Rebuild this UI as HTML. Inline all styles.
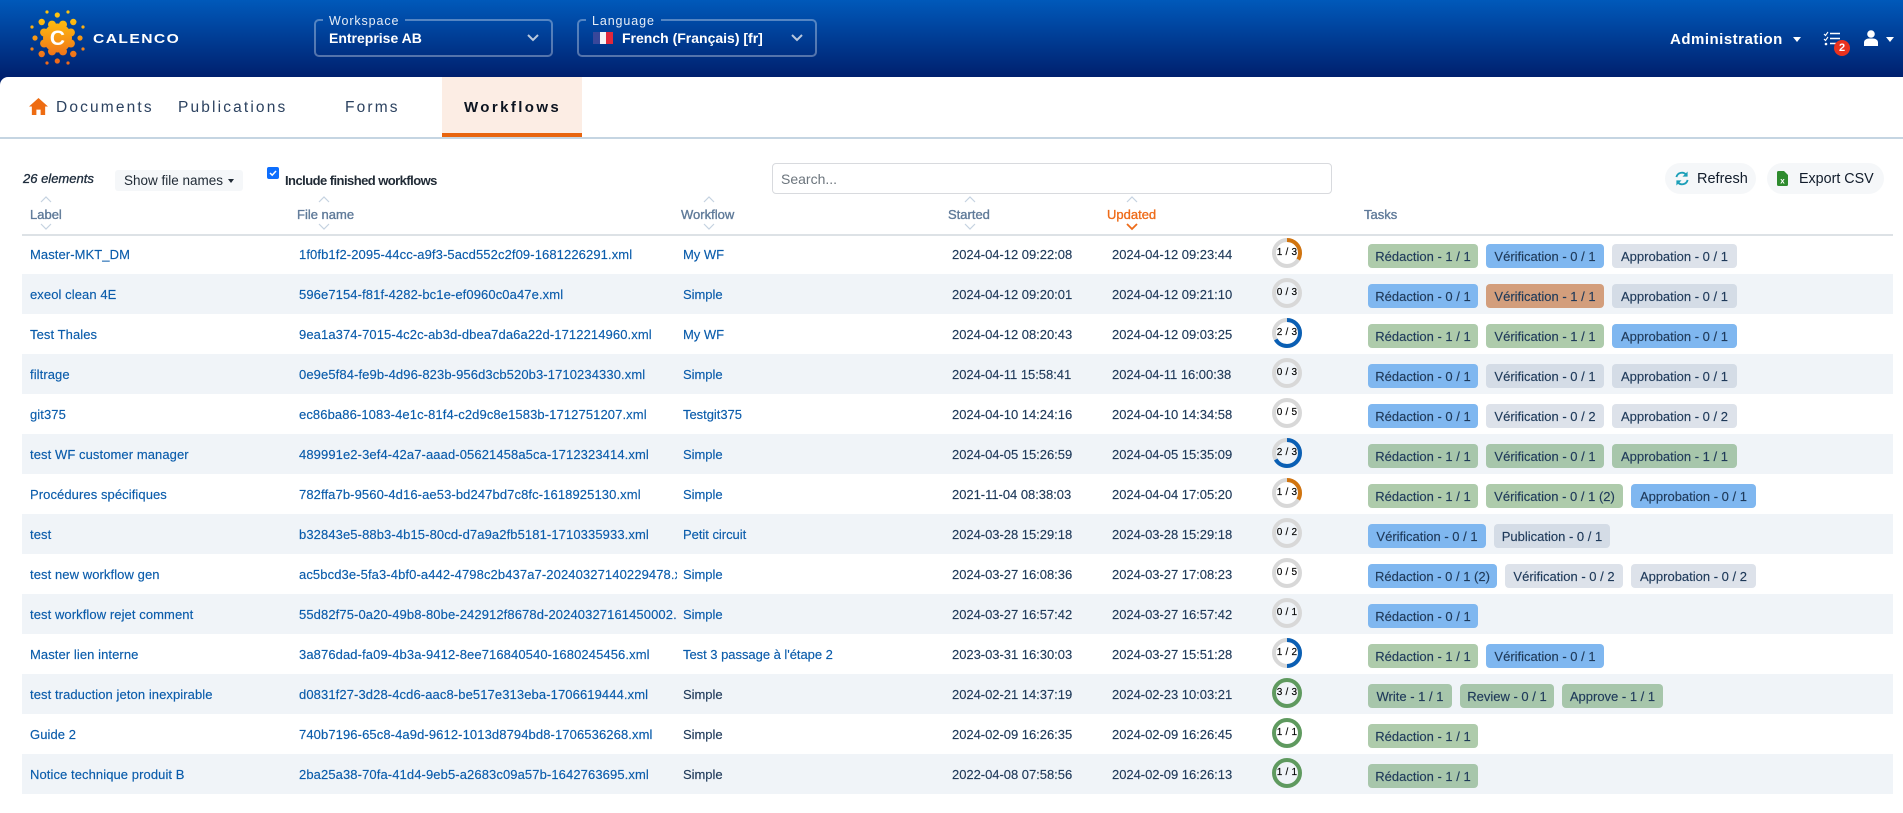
<!DOCTYPE html>
<html lang="en"><head><meta charset="utf-8"><title>Calenco Workflows</title>
<style>
*{box-sizing:border-box}
html,body{margin:0;padding:0;width:1903px;height:813px;overflow:hidden;background:#fff;font-family:"Liberation Sans",sans-serif;color:#1f3a5a}
.abs,.h,.r,.c,fieldset{position:absolute}
#top{position:absolute;left:0;top:0;width:1903px;height:85px;background:linear-gradient(#0059ba 0,#00206e 77px,#00206e 85px)}
#main{position:absolute;left:0;top:77px;width:1903px;height:736px;background:#fff;border-radius:8px 0 0 0}
fieldset{margin:0;padding:0;top:13px;height:44px;border:2px solid rgba(255,255,255,.33);border-radius:5px}
legend{margin-left:7px;padding:0 6px;font-size:12.5px;line-height:14px;color:#e6edf7;letter-spacing:.9px;height:14px;position:relative;top:1px}
.val{position:absolute;color:#fff;font-size:14px;font-weight:bold;line-height:16px;top:30px}
.tab{position:absolute;top:99px;line-height:18px;font-size:15.5px;letter-spacing:2.15px;color:#2c4260}
.h{top:207px;font-size:13px;line-height:16px;color:#5f7a99;-webkit-text-stroke:.35px #5f7a99}
.r{left:22px;width:1871px;height:40px;font-size:13px}
.r:nth-child(even){background:#f0f4f8}
.c{top:0;line-height:42px;white-space:nowrap;letter-spacing:-.03px}
.l{left:8px;color:#0a5cab;letter-spacing:.08px;-webkit-text-stroke:.15px #0a5cab}
.f{left:277px;color:#0a5cab;width:378px;overflow:hidden;letter-spacing:.1px;-webkit-text-stroke:.15px #0a5cab}
.w{left:661px;color:#0a5cab;-webkit-text-stroke:.15px #0a5cab}
.w.d{color:#1f3a5a;-webkit-text-stroke:.15px #1f3a5a}
.s{left:930px;-webkit-text-stroke:.15px #1f3a5a}
.u{left:1090px;-webkit-text-stroke:.15px #1f3a5a}
.ring{position:absolute;left:1250px;top:4px;width:30px;height:30px}
.ring b{position:absolute;left:0;top:0;width:30px;text-align:center;line-height:29px;font-size:10px;font-weight:normal;color:#000;letter-spacing:.2px;-webkit-text-stroke:.15px #000}
.ring svg{position:absolute;left:0;top:0}
.ts{position:absolute;left:1346px;top:10px;display:flex;gap:8px}
.t{display:block;height:24px;line-height:25px;border-radius:4px;text-align:center;font-size:13px;color:#1f3a5a;white-space:nowrap;-webkit-text-stroke:.15px #1f3a5a}
.gn{background:#aecbab}.bl{background:#7fb7f0}.gy{background:#dde2ea}.or{background:#d39e7c}
.r:nth-child(even) .gy{background:#d4dce6}
.r:nth-child(even) .gn{background:#a7c6ab}
.R{width:110px}.V{width:118px}.A{width:125px}
</style></head><body>
<div id="top"></div>
<div id="main"></div>

<svg class="abs" style="left:25px;top:5px" width="70" height="66" viewBox="25 5 70 66">
<defs><linearGradient id="g" gradientUnits="userSpaceOnUse" x1="0" y1="18" x2="0" y2="60"><stop offset="0" stop-color="#ffc20e"/><stop offset="1" stop-color="#ef6a1a"/></linearGradient></defs>
<g fill="url(#g)">
<circle cx="47" cy="12" r="1.6"/><circle cx="57.3" cy="15" r="2.6"/><circle cx="68" cy="12" r="1.6"/><circle cx="41.7" cy="22" r="3.2"/><circle cx="73.3" cy="22" r="3.2"/><circle cx="32" cy="27" r="1.6"/><circle cx="83" cy="27" r="1.6"/><circle cx="35" cy="38" r="2.6"/><circle cx="80" cy="38" r="2.6"/><circle cx="32" cy="49" r="1.6"/><circle cx="83" cy="49" r="1.6"/><circle cx="41.7" cy="54" r="3.2"/><circle cx="73.3" cy="54" r="3.2"/><circle cx="47" cy="63" r="1.6"/><circle cx="57.3" cy="61" r="2.6"/><circle cx="68" cy="63" r="1.6"/>
<circle cx="57.5" cy="38" r="14.5"/>
<circle cx="52" cy="24.6" r="4"/><circle cx="63" cy="24.6" r="4"/><circle cx="44.1" cy="32.5" r="4"/><circle cx="70.9" cy="32.5" r="4"/><circle cx="44.1" cy="43.5" r="4"/><circle cx="70.9" cy="43.5" r="4"/><circle cx="52" cy="51.4" r="4"/><circle cx="63" cy="51.4" r="4"/>
</g>
<text x="57.5" y="45" text-anchor="middle" font-family="Liberation Sans" font-weight="bold" font-size="21" fill="#fff">C</text>
</svg>
<div class="abs" style="left:93px;top:30.500px;font-size:13px;line-height:16px;font-weight:bold;color:#fff;letter-spacing:1.2px;transform:scaleX(1.2);transform-origin:0 50%;white-space:nowrap">CALENCO</div>

<fieldset style="left:314px;width:239px"><legend>Workspace</legend></fieldset>
<div class="val" style="left:329px">Entreprise AB</div>
<svg class="abs" style="left:526px;top:33px" width="14" height="9"><path d="M2 2l5 5 5-5" fill="none" stroke="#b9c8dd" stroke-width="2"/></svg>

<fieldset style="left:577px;width:240px"><legend>Language</legend></fieldset>
<svg class="abs" style="left:593px;top:32px" width="20" height="12"><rect width="7" height="12" fill="#38479a"/><rect x="7" width="6" height="12" fill="#f4f4f6"/><rect x="13" width="7" height="12" fill="#e0283c"/></svg>
<div class="val" style="left:622px">French (Français) [fr]</div>
<svg class="abs" style="left:790px;top:33px" width="14" height="9"><path d="M2 2l5 5 5-5" fill="none" stroke="#b9c8dd" stroke-width="2"/></svg>

<div class="abs" style="left:1670px;top:31px;font-size:15px;line-height:18px;font-weight:bold;color:#fff;letter-spacing:.5px">Administration</div>
<svg class="abs" style="left:1793px;top:37px" width="8" height="5"><path d="M0 0h8L4 5z" fill="#fff"/></svg>
<svg class="abs" style="left:1823px;top:31px" width="18" height="15"><path d="M1 3l1.5 1.5L5 1M1 8l1.5 1.500L5 6" fill="none" stroke="#fff" stroke-width="1.1"/><circle cx="3" cy="13" r="1.3" fill="#fff"/><path d="M7 2.500h10M7 7.500h10M7 12.500h10" stroke="#fff" stroke-width="1.500"/></svg>
<div class="abs" style="left:1834px;top:40px;width:16px;height:16px;border-radius:8px;background:#e8321f;color:#fff;font-size:11px;font-weight:bold;text-align:center;line-height:16px">2</div>
<svg class="abs" style="left:1864px;top:30px" width="14" height="16"><circle cx="7" cy="4" r="3.8" fill="#fff"/><path d="M0 16v-3.500C0 10 2.500 8.500 5 8.500h4c2.500 0 5 1.500 5 4V16z" fill="#fff"/></svg>
<svg class="abs" style="left:1886px;top:37px" width="8" height="5"><path d="M0 0h8L4 5z" fill="#fff"/></svg>

<svg class="abs" style="left:29px;top:98px" width="19" height="17" viewBox="0 0 18 16"><path d="M9 0L0 8h2.700v8h4.300v-5h4v5h4.300V8H18z" fill="#ee6c12"/></svg>
<div class="tab" style="left:56px">Documents</div>
<div class="tab" style="left:178px">Publications</div>
<div class="tab" style="left:345px">Forms</div>
<div class="abs" style="left:442px;top:77px;width:140px;height:60px;background:#fcede4;border-bottom:4px solid #e8650f"></div>
<div class="tab" style="left:464px;font-size:15px;font-weight:bold;color:#0c1420;letter-spacing:2.4px">Workflows</div>
<div class="abs" style="left:0;top:137px;width:1903px;height:2px;background:#c5d5e2"></div>

<div class="abs" style="left:23px;top:171px;font-size:13px;line-height:16px;font-style:italic;color:#1f2d3d;-webkit-text-stroke:.35px #1f2d3d">26 elements</div>
<div class="abs" style="left:115px;top:170px;width:128px;height:21px;background:#f5f7f9;border-radius:3px;font-size:13.5px;line-height:21px;padding-left:9px;color:#212b36">Show file names</div>
<svg class="abs" style="left:228px;top:179px" width="6" height="4"><path d="M0 0h6L3 4z" fill="#212b36"/></svg>
<svg class="abs" style="left:267px;top:167px" width="12" height="12"><rect width="12" height="12" rx="2" fill="#0d6efd"/><path d="M3 6l2.200 2.200L9 4" fill="none" stroke="#fff" stroke-width="1.500"/></svg>
<div class="abs" style="left:285px;top:173px;font-size:13px;line-height:16px;font-weight:bold;color:#212b36;letter-spacing:-.55px">Include finished workflows</div>
<div class="abs" style="left:772px;top:163px;width:560px;height:31px;border:1px solid #d8dade;border-radius:4px;font-size:14px;line-height:30px;padding-left:8px;color:#6c757d">Search...</div>

<div class="abs" style="left:1665px;top:163px;width:91px;height:31px;background:#f5f7f9;border-radius:16px"></div>
<svg class="abs" style="left:1675px;top:171px" width="14" height="15" viewBox="0 0 15 15"><path d="M1.500 6A6 6 0 0 1 12 3.500M13.500 9A6 6 0 0 1 3 11.500" fill="none" stroke="#1b9fb8" stroke-width="2"/><path d="M13.500 0v5.500H8zM1.500 15V9.500H7z" fill="#1b9fb8"/></svg>
<div class="abs" style="left:1697px;top:171px;font-size:14.500px;line-height:17px;color:#111c2b">Refresh</div>
<div class="abs" style="left:1767px;top:163px;width:117px;height:31px;background:#f5f7f9;border-radius:16px"></div>
<svg class="abs" style="left:1777px;top:171px" width="11" height="15"><path d="M0 1.500Q0 0 1.500 0H7l4 4v9.500Q11 15 9.500 15h-8Q0 15 0 13.500z" fill="#2e8b2e"/><text x="5.500" y="12.500" text-anchor="middle" font-size="8" font-weight="bold" fill="#fff" font-family="Liberation Sans">x</text></svg>
<div class="abs" style="left:1799px;top:171px;font-size:14.300px;line-height:17px;color:#111c2b">Export CSV</div>

<div class="h" style="left:30px">Label</div>
<div class="h" style="left:297px">File name</div>
<div class="h" style="left:681px">Workflow</div>
<div class="h" style="left:948px">Started</div>
<div class="h" style="left:1107px;color:#ee6c1a;-webkit-text-stroke:.35px #ee6c1a">Updated</div>
<div class="h" style="left:1364px">Tasks</div>

<svg class="abs" style="left:0;top:195px" width="1200" height="40" fill="none" stroke="#c5d2e0" stroke-width="1.200">
<path d="M41 7l5-5 5 5M41 29l5 5 5-5M319 7l5-5 5 5M319 29l5 5 5-5M704 7l5-5 5 5M704 29l5 5 5-5M965 7l5-5 5 5M965 29l5 5 5-5M1127 7l5-5 5 5"/>
<path d="M1127 29l5 5 5-5" stroke="#ee6c1a" stroke-width="1.800"/>
</svg>
<div class="abs" style="left:22px;top:234px;width:1871px;height:2px;background:#dde2e6"></div>

<div class="abs" style="left:0;top:234px;width:1903px;height:560px">
<div class="r" style="top:0;position:absolute"><span class="c l">Master-MKT_DM</span><span class="c f">1f0fb1f2-2095-44cc-a9f3-5acd552c2f09-1681226291.xml</span><span class="c w">My WF</span><span class="c s">2024-04-12 09:22:08</span><span class="c u">2024-04-12 09:23:44</span>
<div class="ring"><svg width="30" height="30" viewBox="0 0 30 30"><circle cx="15" cy="15" r="13" fill="none" stroke="#d8d8d8" stroke-width="4"/><circle cx="15" cy="15" r="13" fill="none" stroke="#d1740f" stroke-width="4" pathLength="100" stroke-dasharray="33.300 100" transform="rotate(-90 15 15)"/></svg><b>1 / 3</b></div>
<div class="ts"><span class="t R gn">Rédaction - 1 / 1</span><span class="t V bl">Vérification - 0 / 1</span><span class="t A gy">Approbation - 0 / 1</span></div></div>

<div class="r" style="top:40px"><span class="c l">exeol clean 4E</span><span class="c f">596e7154-f81f-4282-bc1e-ef0960c0a47e.xml</span><span class="c w">Simple</span><span class="c s">2024-04-12 09:20:01</span><span class="c u">2024-04-12 09:21:10</span>
<div class="ring"><svg width="30" height="30" viewBox="0 0 30 30"><circle cx="15" cy="15" r="13" fill="none" stroke="#d8d8d8" stroke-width="4"/></svg><b>0 / 3</b></div>
<div class="ts"><span class="t R bl">Rédaction - 0 / 1</span><span class="t V or">Vérification - 1 / 1</span><span class="t A gy">Approbation - 0 / 1</span></div></div>

<div class="r" style="top:80px"><span class="c l">Test Thales</span><span class="c f">9ea1a374-7015-4c2c-ab3d-dbea7da6a22d-1712214960.xml</span><span class="c w">My WF</span><span class="c s">2024-04-12 08:20:43</span><span class="c u">2024-04-12 09:03:25</span>
<div class="ring"><svg width="30" height="30" viewBox="0 0 30 30"><circle cx="15" cy="15" r="13" fill="none" stroke="#d8d8d8" stroke-width="4"/><circle cx="15" cy="15" r="13" fill="none" stroke="#0a5fb4" stroke-width="4" pathLength="100" stroke-dasharray="66.700 100" transform="rotate(-90 15 15)"/></svg><b>2 / 3</b></div>
<div class="ts"><span class="t R gn">Rédaction - 1 / 1</span><span class="t V gn">Vérification - 1 / 1</span><span class="t A bl">Approbation - 0 / 1</span></div></div>

<div class="r" style="top:120px"><span class="c l">filtrage</span><span class="c f">0e9e5f84-fe9b-4d96-823b-956d3cb520b3-1710234330.xml</span><span class="c w">Simple</span><span class="c s">2024-04-11 15:58:41</span><span class="c u">2024-04-11 16:00:38</span>
<div class="ring"><svg width="30" height="30" viewBox="0 0 30 30"><circle cx="15" cy="15" r="13" fill="none" stroke="#d8d8d8" stroke-width="4"/></svg><b>0 / 3</b></div>
<div class="ts"><span class="t R bl">Rédaction - 0 / 1</span><span class="t V gy">Vérification - 0 / 1</span><span class="t A gy">Approbation - 0 / 1</span></div></div>

<div class="r" style="top:160px"><span class="c l">git375</span><span class="c f">ec86ba86-1083-4e1c-81f4-c2d9c8e1583b-1712751207.xml</span><span class="c w">Testgit375</span><span class="c s">2024-04-10 14:24:16</span><span class="c u">2024-04-10 14:34:58</span>
<div class="ring"><svg width="30" height="30" viewBox="0 0 30 30"><circle cx="15" cy="15" r="13" fill="none" stroke="#d8d8d8" stroke-width="4"/></svg><b>0 / 5</b></div>
<div class="ts"><span class="t R bl">Rédaction - 0 / 1</span><span class="t V gy">Vérification - 0 / 2</span><span class="t A gy">Approbation - 0 / 2</span></div></div>

<div class="r" style="top:200px"><span class="c l">test WF customer manager</span><span class="c f">489991e2-3ef4-42a7-aaad-05621458a5ca-1712323414.xml</span><span class="c w">Simple</span><span class="c s">2024-04-05 15:26:59</span><span class="c u">2024-04-05 15:35:09</span>
<div class="ring"><svg width="30" height="30" viewBox="0 0 30 30"><circle cx="15" cy="15" r="13" fill="none" stroke="#d8d8d8" stroke-width="4"/><circle cx="15" cy="15" r="13" fill="none" stroke="#0a5fb4" stroke-width="4" pathLength="100" stroke-dasharray="66.700 100" transform="rotate(-90 15 15)"/></svg><b>2 / 3</b></div>
<div class="ts"><span class="t R gn">Rédaction - 1 / 1</span><span class="t V gn">Vérification - 0 / 1</span><span class="t A gn">Approbation - 1 / 1</span></div></div>

<div class="r" style="top:240px"><span class="c l">Procédures spécifiques</span><span class="c f">782ffa7b-9560-4d16-ae53-bd247bd7c8fc-1618925130.xml</span><span class="c w">Simple</span><span class="c s">2021-11-04 08:38:03</span><span class="c u">2024-04-04 17:05:20</span>
<div class="ring"><svg width="30" height="30" viewBox="0 0 30 30"><circle cx="15" cy="15" r="13" fill="none" stroke="#d8d8d8" stroke-width="4"/><circle cx="15" cy="15" r="13" fill="none" stroke="#d1740f" stroke-width="4" pathLength="100" stroke-dasharray="33.300 100" transform="rotate(-90 15 15)"/></svg><b>1 / 3</b></div>
<div class="ts"><span class="t R gn">Rédaction - 1 / 1</span><span class="t gn" style="width:137px">Vérification - 0 / 1 (2)</span><span class="t A bl">Approbation - 0 / 1</span></div></div>

<div class="r" style="top:280px"><span class="c l">test</span><span class="c f">b32843e5-88b3-4b15-80cd-d7a9a2fb5181-1710335933.xml</span><span class="c w">Petit circuit</span><span class="c s">2024-03-28 15:29:18</span><span class="c u">2024-03-28 15:29:18</span>
<div class="ring"><svg width="30" height="30" viewBox="0 0 30 30"><circle cx="15" cy="15" r="13" fill="none" stroke="#d8d8d8" stroke-width="4"/></svg><b>0 / 2</b></div>
<div class="ts"><span class="t V bl">Vérification - 0 / 1</span><span class="t gy" style="width:116px">Publication - 0 / 1</span></div></div>

<div class="r" style="top:320px"><span class="c l">test new workflow gen</span><span class="c f">ac5bcd3e-5fa3-4bf0-a442-4798c2b437a7-20240327140229478.xml</span><span class="c w">Simple</span><span class="c s">2024-03-27 16:08:36</span><span class="c u">2024-03-27 17:08:23</span>
<div class="ring"><svg width="30" height="30" viewBox="0 0 30 30"><circle cx="15" cy="15" r="13" fill="none" stroke="#d8d8d8" stroke-width="4"/></svg><b>0 / 5</b></div>
<div class="ts"><span class="t bl" style="width:129px">Rédaction - 0 / 1 (2)</span><span class="t V gy">Vérification - 0 / 2</span><span class="t A gy">Approbation - 0 / 2</span></div></div>

<div class="r" style="top:360px"><span class="c l">test workflow rejet comment</span><span class="c f">55d82f75-0a20-49b8-80be-242912f8678d-20240327161450002.xml</span><span class="c w">Simple</span><span class="c s">2024-03-27 16:57:42</span><span class="c u">2024-03-27 16:57:42</span>
<div class="ring"><svg width="30" height="30" viewBox="0 0 30 30"><circle cx="15" cy="15" r="13" fill="none" stroke="#d8d8d8" stroke-width="4"/></svg><b>0 / 1</b></div>
<div class="ts"><span class="t R bl">Rédaction - 0 / 1</span></div></div>

<div class="r" style="top:400px"><span class="c l">Master lien interne</span><span class="c f">3a876dad-fa09-4b3a-9412-8ee716840540-1680245456.xml</span><span class="c w">Test 3 passage à l'étape 2</span><span class="c s">2023-03-31 16:30:03</span><span class="c u">2024-03-27 15:51:28</span>
<div class="ring"><svg width="30" height="30" viewBox="0 0 30 30"><circle cx="15" cy="15" r="13" fill="none" stroke="#d8d8d8" stroke-width="4"/><circle cx="15" cy="15" r="13" fill="none" stroke="#0a5fb4" stroke-width="4" pathLength="100" stroke-dasharray="50 100" transform="rotate(-90 15 15)"/></svg><b>1 / 2</b></div>
<div class="ts"><span class="t R gn">Rédaction - 1 / 1</span><span class="t V bl">Vérification - 0 / 1</span></div></div>

<div class="r" style="top:440px"><span class="c l">test traduction jeton inexpirable</span><span class="c f">d0831f27-3d28-4cd6-aac8-be517e313eba-1706619444.xml</span><span class="c w d">Simple</span><span class="c s">2024-02-21 14:37:19</span><span class="c u">2024-02-23 10:03:21</span>
<div class="ring"><svg width="30" height="30" viewBox="0 0 30 30"><circle cx="15" cy="15" r="13" fill="none" stroke="#5f9a5f" stroke-width="4"/></svg><b>3 / 3</b></div>
<div class="ts"><span class="t gn" style="width:84px">Write - 1 / 1</span><span class="t gn" style="width:94px">Review - 0 / 1</span><span class="t gn" style="width:101px">Approve - 1 / 1</span></div></div>

<div class="r" style="top:480px"><span class="c l">Guide 2</span><span class="c f">740b7196-65c8-4a9d-9612-1013d8794bd8-1706536268.xml</span><span class="c w d">Simple</span><span class="c s">2024-02-09 16:26:35</span><span class="c u">2024-02-09 16:26:45</span>
<div class="ring"><svg width="30" height="30" viewBox="0 0 30 30"><circle cx="15" cy="15" r="13" fill="none" stroke="#5f9a5f" stroke-width="4"/></svg><b>1 / 1</b></div>
<div class="ts"><span class="t R gn">Rédaction - 1 / 1</span></div></div>

<div class="r" style="top:520px"><span class="c l">Notice technique produit B</span><span class="c f">2ba25a38-70fa-41d4-9eb5-a2683c09a57b-1642763695.xml</span><span class="c w d">Simple</span><span class="c s">2022-04-08 07:58:56</span><span class="c u">2024-02-09 16:26:13</span>
<div class="ring"><svg width="30" height="30" viewBox="0 0 30 30"><circle cx="15" cy="15" r="13" fill="none" stroke="#5f9a5f" stroke-width="4"/></svg><b>1 / 1</b></div>
<div class="ts"><span class="t R gn">Rédaction - 1 / 1</span></div></div>
</div>
</body></html>
